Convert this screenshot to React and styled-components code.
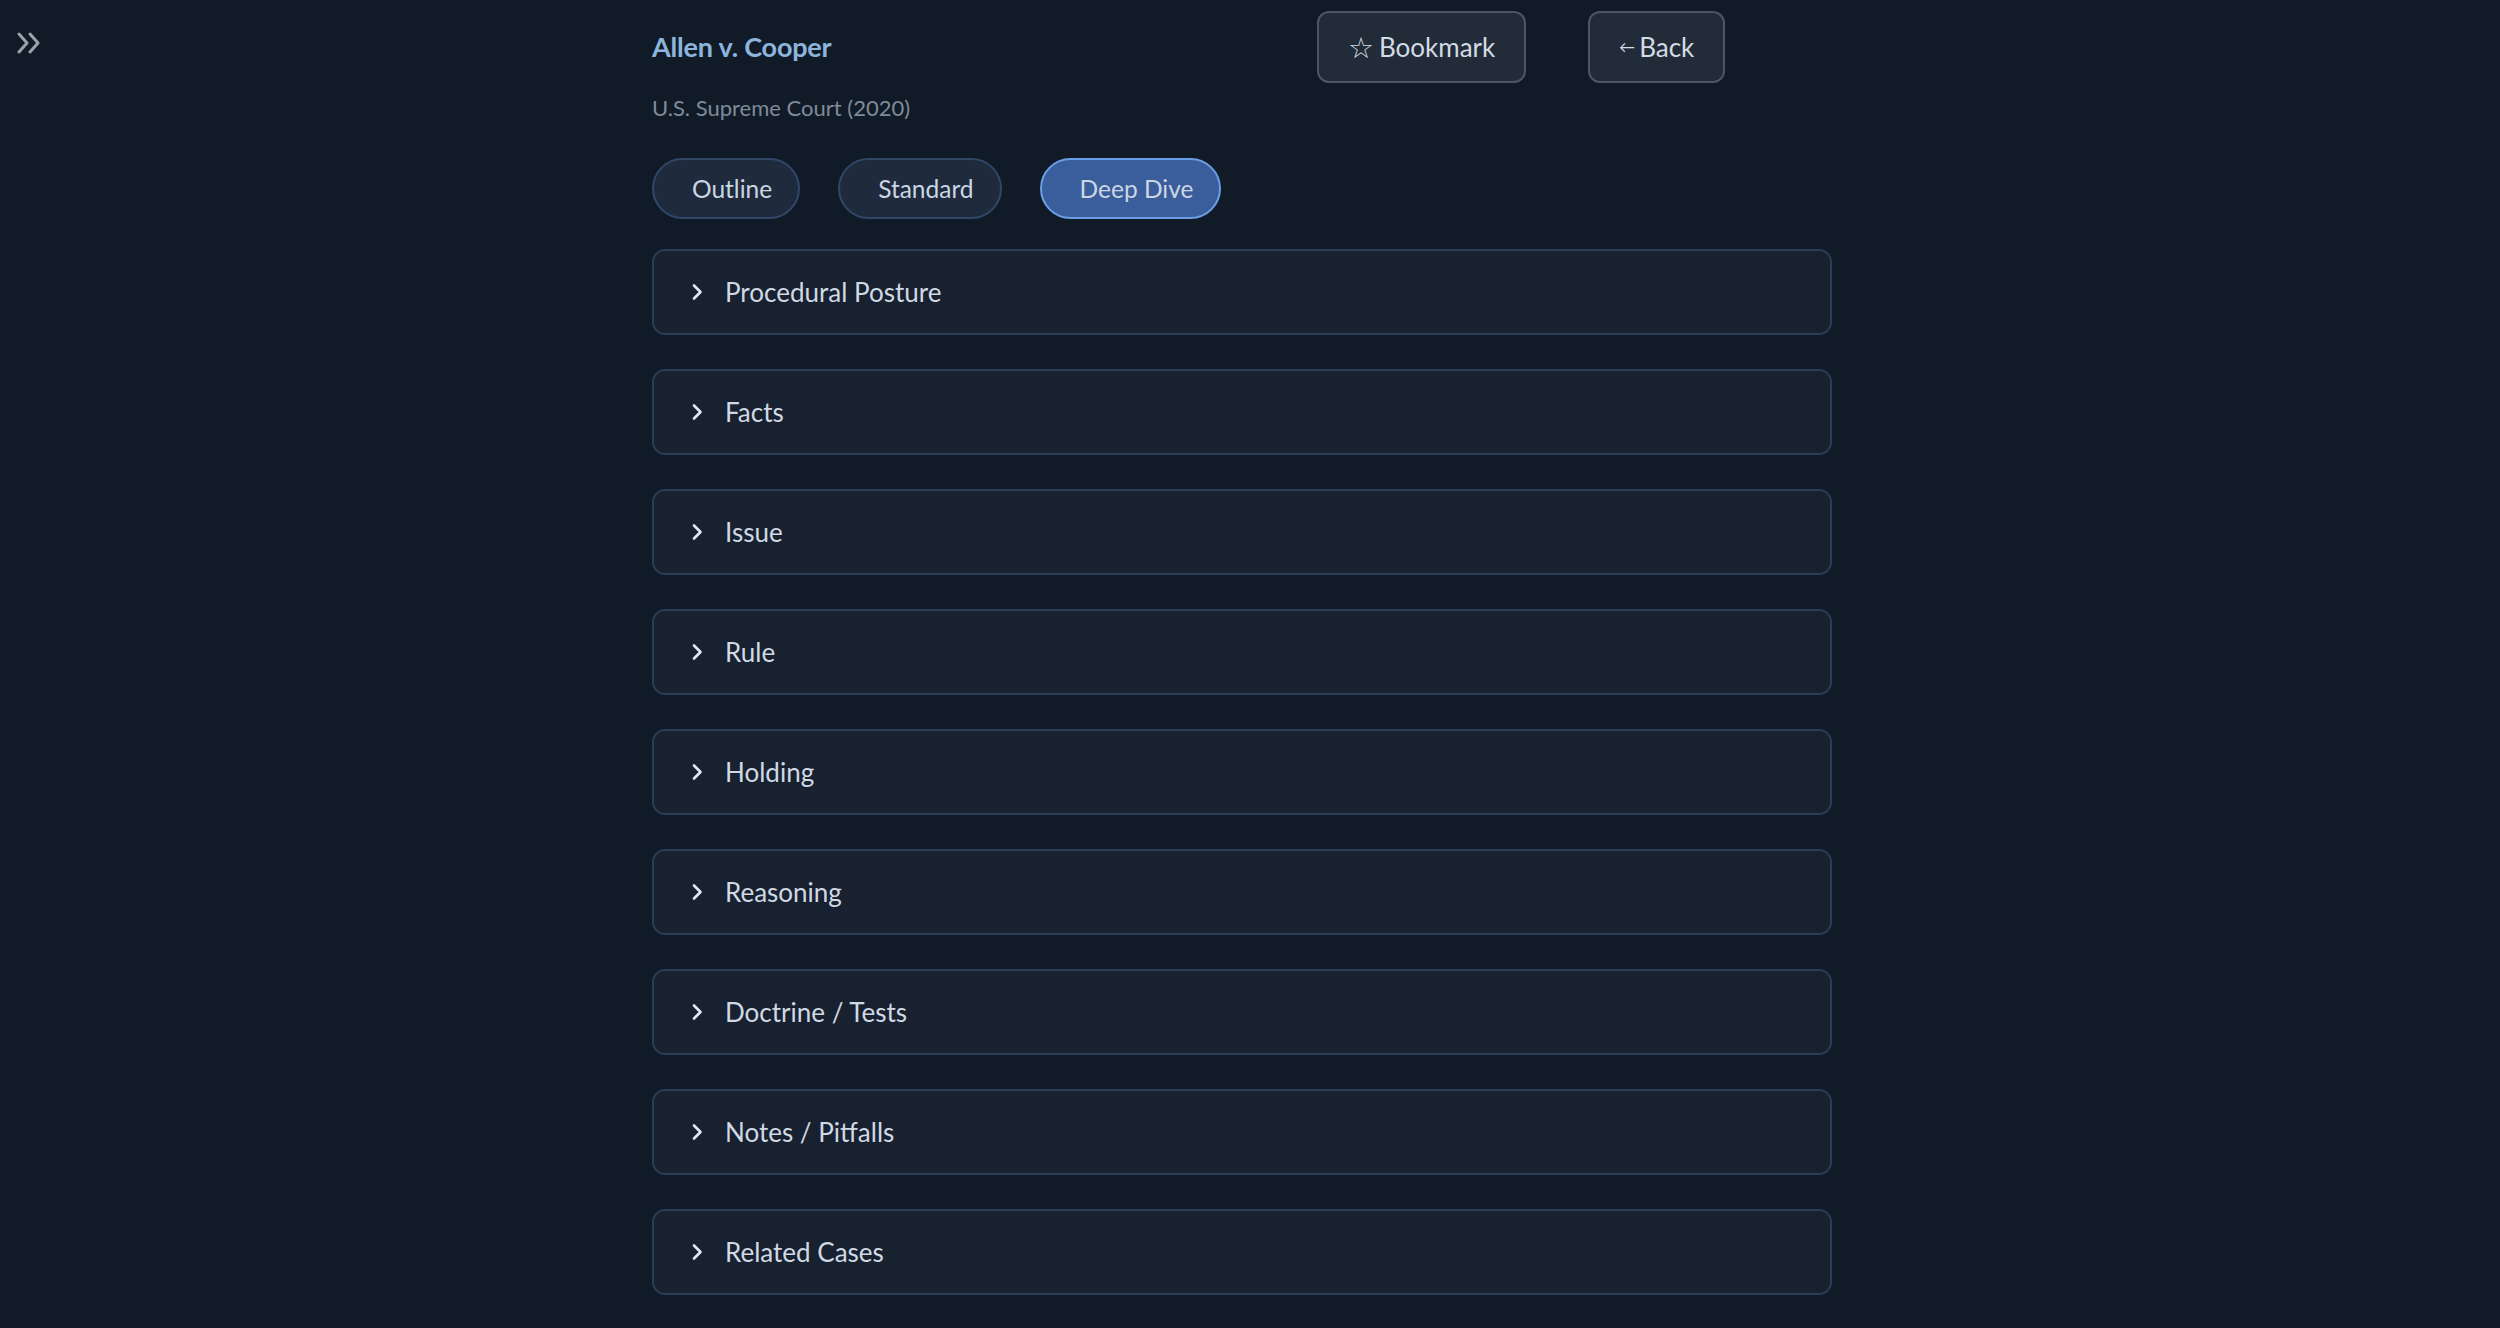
import React from "react";
import styled, { createGlobalStyle } from "styled-components";

const GlobalStyle = createGlobalStyle`
  html, body {
    margin: 0;
    padding: 0;
    background: #111b27;
  }
  body {
    font-family: "Lato", "Noto Sans", sans-serif;
    color: #d0d9e4;
  }
`;

const Page = styled.div`
  position: relative;
  min-height: 100vh;
  padding-right: 16px;
  background: #111b27;
`;

const SidebarToggle = styled.button`
  position: absolute;
  top: 29px;
  left: 15px;
  width: 28px;
  height: 28px;
  padding: 0;
  border: none;
  background: transparent;
  color: #9aa2ad;
  display: flex;
  align-items: center;
  justify-content: center;
`;

const Main = styled.main`
  width: 1180px;
  margin: 0 auto;
  padding-top: 11px;
  display: flex;
  flex-direction: column;
`;

const HeaderRow = styled.div`
  display: grid;
  grid-template-columns: 638px 244px 244px;
  column-gap: 27px;
  align-items: center;
  height: 72px;
`;

const Title = styled.h2`
  margin: 0;
  font-size: 27px;
  font-weight: 700;
  color: #8db4dc;
  letter-spacing: -0.2px;
  transform: translateY(-1px);
`;

const ActionButton = styled.button`
  justify-self: start;
  height: 72px;
  padding: 0 29px;
  border: 2px solid #4b5564;
  border-radius: 12px;
  background: #222b38;
  color: #d3dbe5;
  font-family: inherit;
  font-size: 26px;
  display: flex;
  align-items: center;
  gap: ${(p) => p.$gap || "6px"};
`;

const Glyph = styled.span`
  font-size: ${(p) => p.$size || "1em"};
  line-height: 1;
`;

const Subtitle = styled.div`
  margin-top: 11px;
  font-size: 22px;
  color: #7f8b9a;
`;

const PillRow = styled.div`
  display: flex;
  gap: 38px;
  margin-top: 37px;
`;

const Pill = styled.button`
  height: 61px;
  padding: 0 26px 0 38px;
  border-radius: 31px;
  border: 2px solid ${(p) => (p.$active ? "#6a9fe6" : "#30476a")};
  background: ${(p) => (p.$active ? "#3a5d9c" : "#1f2b3d")};
  color: #cbd6e3;
  font-family: inherit;
  font-size: 24.5px;
`;

const SectionList = styled.div`
  display: flex;
  flex-direction: column;
  gap: 34px;
  margin-top: 30px;
`;

const Section = styled.div`
  height: 86px;
  box-sizing: border-box;
  border: 2px solid #2a3d59;
  border-radius: 13px;
  background: #182130;
  display: flex;
  align-items: center;
  padding-left: 36px;
  gap: 21px;
  font-size: 26px;
  color: #d0d9e4;
`;

const Chevron = () => (
  <svg width="14" height="18" viewBox="0 0 14 18" fill="none">
    <path d="M4 2.5 L10.5 9 L4 15.5" stroke="#e2e8f0" strokeWidth="2.6" strokeLinecap="round" strokeLinejoin="round" />
  </svg>
);

const DoubleChevron = () => (
  <svg width="26" height="22" viewBox="0 0 26 22" fill="none">
    <path d="M3 2 L11 11 L3 20" stroke="currentColor" strokeWidth="3" strokeLinecap="round" strokeLinejoin="round" />
    <path d="M14 2 L22 11 L14 20" stroke="currentColor" strokeWidth="3" strokeLinecap="round" strokeLinejoin="round" />
  </svg>
);

const sections = [
  "Procedural Posture",
  "Facts",
  "Issue",
  "Rule",
  "Holding",
  "Reasoning",
  "Doctrine / Tests",
  "Notes / Pitfalls",
  "Related Cases",
];

const modes = ["Outline", "Standard", "Deep Dive"];

export default function App() {
  return (
    <Page>
      <GlobalStyle />
      <SidebarToggle aria-label="Open sidebar">
        <DoubleChevron />
      </SidebarToggle>
      <Main>
        <HeaderRow>
          <Title>Allen v. Cooper</Title>
          <ActionButton $gap="5px">
            <Glyph $size="1.12em">☆</Glyph>
            Bookmark
          </ActionButton>
          <ActionButton $gap="4px">
            <Glyph $size="0.62em">←</Glyph>
            Back
          </ActionButton>
        </HeaderRow>
        <Subtitle>U.S. Supreme Court (2020)</Subtitle>
        <PillRow>
          {modes.map((m) => (
            <Pill key={m} $active={m === "Deep Dive"}>
              {m}
            </Pill>
          ))}
        </PillRow>
        <SectionList>
          {sections.map((s) => (
            <Section key={s}>
              <Chevron />
              {s}
            </Section>
          ))}
        </SectionList>
      </Main>
    </Page>
  );
}
